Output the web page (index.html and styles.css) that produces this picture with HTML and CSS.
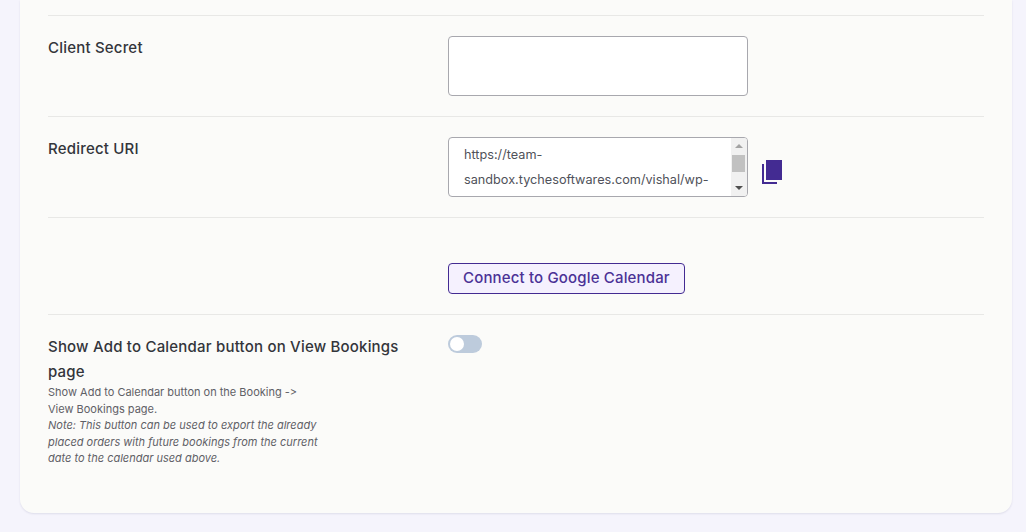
FILE: index.html
```html
<!DOCTYPE html>
<html lang="en">
<head>
<meta charset="utf-8">
<title>Google Calendar settings</title>
<link rel="stylesheet" href="styles.css">
</head>
<body>
<main class="card">
  <section class="row">
    <div class="label-col"><label class="label" for="secret">Client Secret</label></div>
    <div class="field-col"><textarea id="secret" class="input"></textarea></div>
  </section>
  <section class="row">
    <div class="label-col"><label class="label" for="uri">Redirect URI</label></div>
    <div class="field-col">
      <div class="uri-box">
        <textarea id="uri" class="uri-text" readonly>https://team-sandbox.tychesoftwares.com/vishal/wp-admin/admin.php?page=bkap_booking&amp;action=calendar_sync_settings&amp;section=google_calendar&amp;callback=1</textarea>
        <div class="scrollbar" aria-hidden="true">
          <span class="arrow arrow-up"></span>
          <span class="thumb"></span>
          <span class="arrow arrow-down"></span>
        </div>
      </div>
      <svg class="copy" viewBox="0 0 20 24" aria-hidden="true"><path d="M0 4h2v18h13v2H0z"/><path d="M4 0h16v20H4z"/></svg>
    </div>
  </section>
  <section class="row row-connect">
    <div class="label-col"></div>
    <div class="field-col"><button class="btn" type="button">Connect to Google Calendar</button></div>
  </section>
  <section class="row row-last">
    <div class="label-col">
      <div class="label label-wrap">Show Add to Calendar button on View Bookings page</div>
      <p class="desc">Show Add to Calendar button on the Booking -&gt; View Bookings page.<br><em>Note: This button can be used to export the already placed orders with future bookings from the current date to the calendar used above.</em></p>
    </div>
    <div class="field-col"><span class="toggle"><span class="knob"></span></span></div>
  </section>
</main>
</body>
</html>
```
FILE: styles.css
```css
* { box-sizing: border-box; }
html, body { margin: 0; height: 532px; overflow: hidden; }
body { background: #f5f4fc; font-family: Inter, "Liberation Sans", sans-serif; color: #2b2d33; font-feature-settings: "calt" 0; }
.card {
  width: 992px;
  height: 513px;
  margin-left: 20px;
  padding: 15px 28px 0;
  background: #fbfbf9;
  border-radius: 0 0 14px 14px;
  box-shadow: 0 1px 2px rgba(60, 60, 110, .12);
}
.row { display: flex; padding: 20px 0; border-top: 1px solid #e8e8e6; }
.row-connect { padding-top: 45px; }
.label-col { width: 400px; flex: none; }
.field-col { display: flex; align-items: flex-start; align-self: flex-start; }
.label { display: block; font-size: 15px; letter-spacing: .2px; font-weight: 500; line-height: 25px; margin-top: -1px; color: #33353b; }
.label-wrap { max-width: 360px; }
.input, .uri-box {
  display: block;
  width: 300px;
  height: 60px;
  background: #fff;
  border: 1px solid #a8a8ae;
  border-radius: 4px;
}
.input { padding: 5px 15px 0; resize: none; outline: none; }
.uri-box { display: flex; overflow: hidden; }
.uri-text {
  flex: 1;
  min-width: 0;
  height: 100%;
  padding: 4px 0 0 15px;
  background: transparent;
  border: 0;
  font: 400 12.7px/25px Inter, "Liberation Sans", sans-serif;
  font-feature-settings: "calt" 0;
  color: #50525a;
  resize: none;
  outline: none;
  overflow: hidden;
}
.scrollbar { flex: none; width: 16px; padding-right: 1px; display: flex; flex-direction: column; align-items: center; background: #f1f1f1; }
.arrow { flex: none; width: 0; height: 0; border-left: 4px solid transparent; border-right: 4px solid transparent; }
.arrow-up { margin: 6px 0 7px; border-bottom: 4px solid #a3a3a3; }
.thumb { flex: none; width: 13px; height: 17px; background: #c1c1c1; }
.arrow-down { margin-top: auto; margin-bottom: 6px; border-top: 4px solid #505050; }
.copy { flex: none; width: 20px; height: 24px; margin: 23px 0 0 14px; fill: #432b92; }
.btn {
  display: block;
  height: 31px;
  padding: 0 14px 2px;
  background: #f5f1fe;
  border: 1px solid #432b92;
  border-radius: 4px;
  font: 550 15px Inter, "Liberation Sans", sans-serif;
  letter-spacing: .16px;
  font-feature-settings: "calt" 0;
  color: #4b3296;
}
.desc { width: 275px; margin: 0; font-size: 11px; line-height: 16.5px; color: #5f6066; }
.toggle { display: block; width: 34px; height: 18px; padding: 2px; background: #bdcbdc; border-radius: 9px; }
.knob { display: block; width: 14px; height: 14px; background: #fff; border-radius: 50%; }
```
